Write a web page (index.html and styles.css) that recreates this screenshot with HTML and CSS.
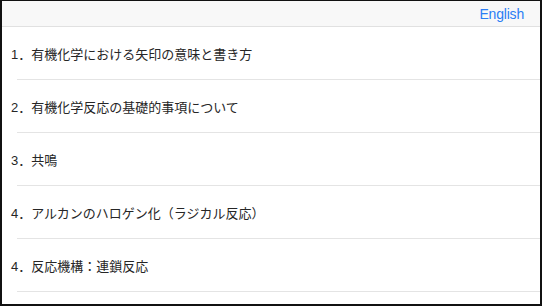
FILE: index.html
```html
<!DOCTYPE html>
<html lang="ja">
<head>
<meta charset="utf-8">
<link rel="stylesheet" href="styles.css">
</head>
<body>
<div class="frame">
  <header class="topbar">
    <span class="lang">English</span>
  </header>
  <ul class="list">
    <li class="item"><span class="label">1．有機化学における矢印の意味と書き方</span></li>
    <li class="item"><span class="label">2．有機化学反応の基礎的事項について</span></li>
    <li class="item"><span class="label">3．共鳴</span></li>
    <li class="item"><span class="label">4．アルカンのハロゲン化（ラジカル反応）</span></li>
    <li class="item"><span class="label">4．反応機構：連鎖反応</span></li>
  </ul>
</div>
</body>
</html>
```

FILE: styles.css
```css
html, body {
  margin: 0;
  padding: 0;
  background: #ffffff;
}
.frame {
  width: 542px;
  height: 306px;
  box-sizing: border-box;
  border-top: 1px solid #111;
  border-left: 2px solid #111;
  border-right: 2px solid #111;
  border-bottom: 2px solid #111;
  background: #ffffff;
  overflow: hidden;
  font-family: "Liberation Sans", "Noto Sans CJK JP", sans-serif;
}
.topbar {
  height: 25px;
  background: #f8f8f8;
  border-bottom: 1px solid #e1e1e1;
  display: flex;
  align-items: center;
  justify-content: flex-end;
  padding-right: 16px;
}
.lang {
  color: #2a7df4;
  font-size: 14px;
  letter-spacing: -0.2px;
}
.list {
  list-style: none;
  margin: 0;
  padding: 0;
}
.item {
  height: 52px;
  display: flex;
  align-items: center;
  padding-left: 9px;
  position: relative;
  border-bottom: 1px solid transparent;
}
.item::after {
  content: "";
  position: absolute;
  left: 15px;
  right: 0;
  bottom: -1px;
  height: 1px;
  background: #e4e4e4;
}
.label {
  font-size: 13px;
  color: #262626;
}
```
